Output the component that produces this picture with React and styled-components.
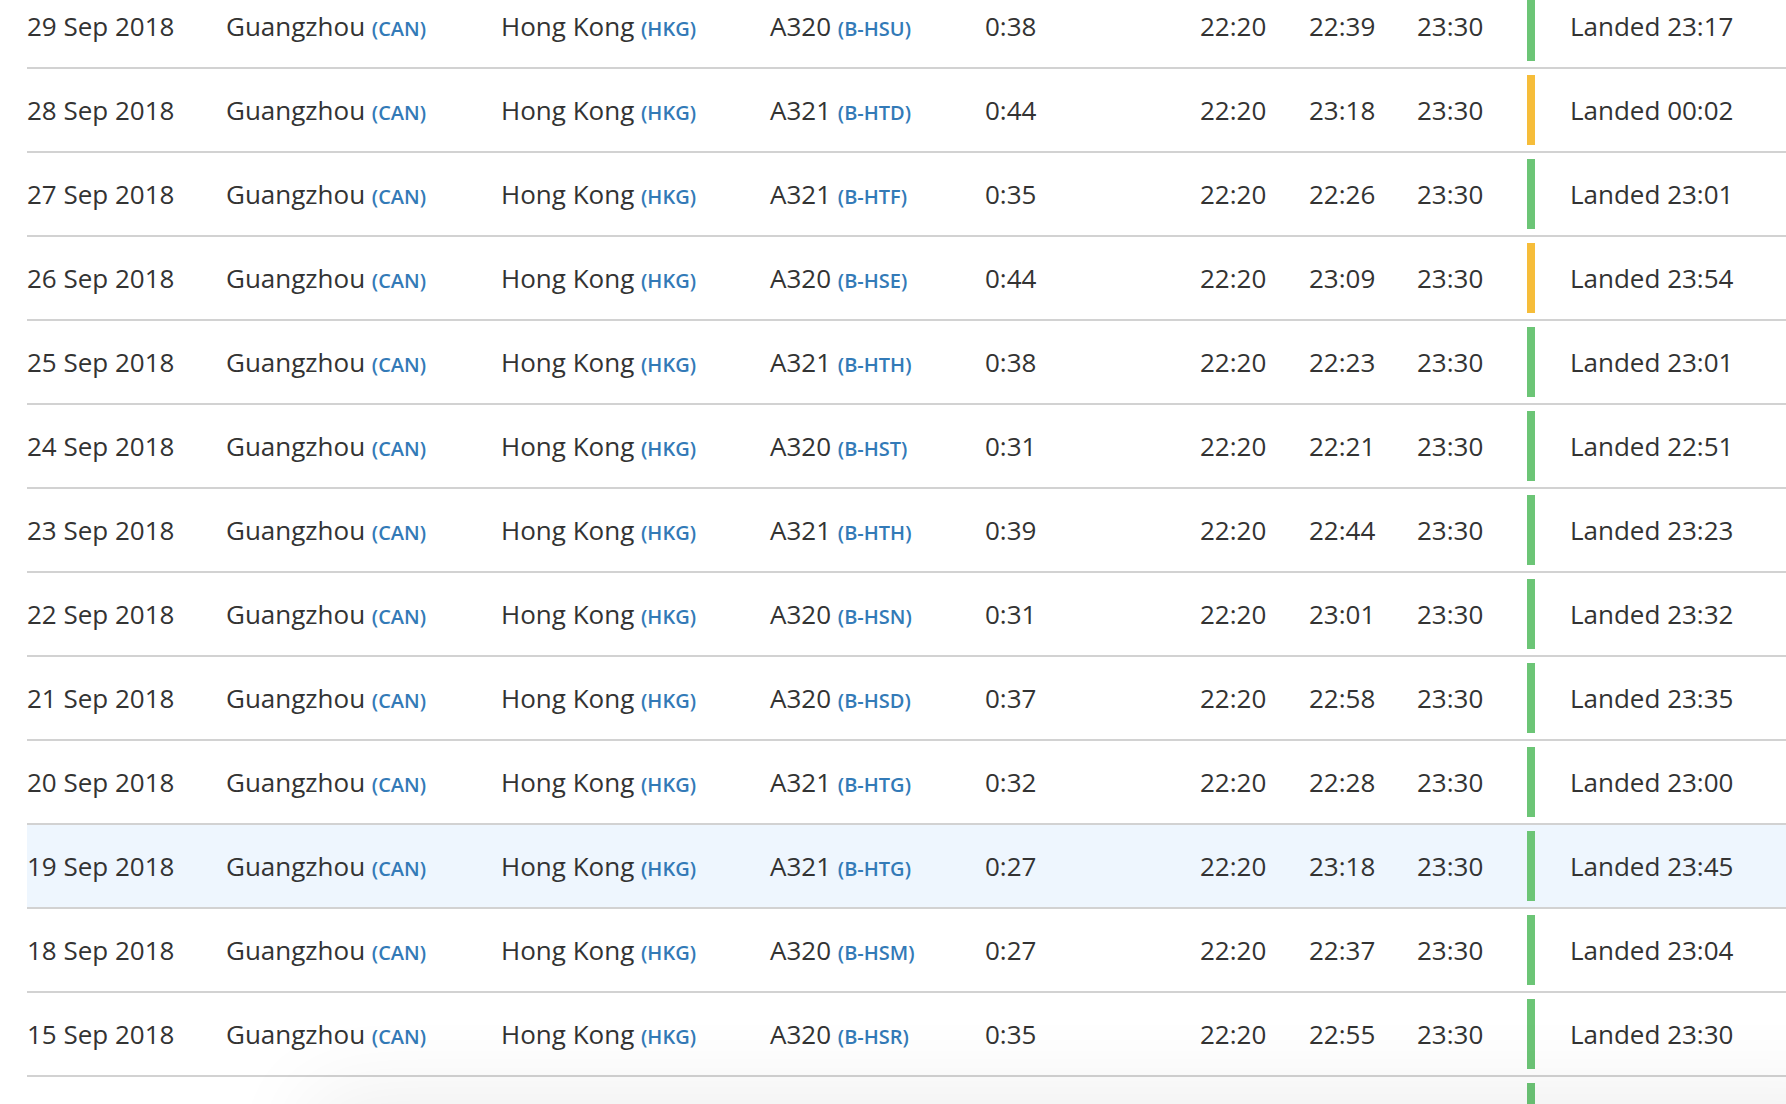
import React from "react";
import styled, { createGlobalStyle } from "styled-components";

const GlobalStyle = createGlobalStyle`
  html, body {
    margin: 0;
    padding: 0;
    background: #ffffff;
    overflow: hidden;
  }
  body {
    font-family: "Open Sans", "Liberation Sans", sans-serif;
    color: #333333;
  }
`;

const flights = [
  { date: "29 Sep 2018", type: "A320", reg: "B-HSU", time: "0:38", atd: "22:39", status: "ok", landed: "23:17" },
  { date: "28 Sep 2018", type: "A321", reg: "B-HTD", time: "0:44", atd: "23:18", status: "late", landed: "00:02" },
  { date: "27 Sep 2018", type: "A321", reg: "B-HTF", time: "0:35", atd: "22:26", status: "ok", landed: "23:01" },
  { date: "26 Sep 2018", type: "A320", reg: "B-HSE", time: "0:44", atd: "23:09", status: "late", landed: "23:54" },
  { date: "25 Sep 2018", type: "A321", reg: "B-HTH", time: "0:38", atd: "22:23", status: "ok", landed: "23:01" },
  { date: "24 Sep 2018", type: "A320", reg: "B-HST", time: "0:31", atd: "22:21", status: "ok", landed: "22:51" },
  { date: "23 Sep 2018", type: "A321", reg: "B-HTH", time: "0:39", atd: "22:44", status: "ok", landed: "23:23" },
  { date: "22 Sep 2018", type: "A320", reg: "B-HSN", time: "0:31", atd: "23:01", status: "ok", landed: "23:32" },
  { date: "21 Sep 2018", type: "A320", reg: "B-HSD", time: "0:37", atd: "22:58", status: "ok", landed: "23:35" },
  { date: "20 Sep 2018", type: "A321", reg: "B-HTG", time: "0:32", atd: "22:28", status: "ok", landed: "23:00" },
  { date: "19 Sep 2018", type: "A321", reg: "B-HTG", time: "0:27", atd: "23:18", status: "ok", landed: "23:45", hover: true },
  { date: "18 Sep 2018", type: "A320", reg: "B-HSM", time: "0:27", atd: "22:37", status: "ok", landed: "23:04" },
  { date: "15 Sep 2018", type: "A320", reg: "B-HSR", time: "0:35", atd: "22:55", status: "ok", landed: "23:30" },
];

const FlightRow = ({ f }) => (
  <Row $hover={f.hover}>
    <Cell>{f.date}</Cell>
    <Cell>
      Guangzhou <Code>(CAN)</Code>
    </Cell>
    <Cell>
      Hong Kong <Code>(HKG)</Code>
    </Cell>
    <Cell>
      {f.type} <Code>({f.reg})</Code>
    </Cell>
    <Cell>{f.time}</Cell>
    <Cell>22:20</Cell>
    <Cell>{f.atd}</Cell>
    <Cell>23:30</Cell>
    <StatusBar $status={f.status} />
    <Cell>Landed {f.landed}</Cell>
  </Row>
);

const App = () => {
  return (
    <>
      <GlobalStyle />
      <Page>
        <Table>
          {flights.map((f, i) => (
            <FlightRow key={i} f={f} />
          ))}
          {/* next row sits below the fold, only its status bar shows */}
          <Row>
            <Cell />
            <Cell />
            <Cell />
            <Cell />
            <Cell />
            <Cell />
            <Cell />
            <Cell />
            <StatusBar $status="ok" />
            <Cell />
          </Row>
        </Table>
      </Page>
      <BottomShade />
    </>
  );
};

export default App;

const Page = styled.div`
  width: 1786px;
  height: 1104px;
  overflow: hidden;
`;

const Table = styled.div`
  margin-top: -15px;
  margin-left: 27px;
  display: flex;
  flex-direction: column;
`;

const Row = styled.div`
  display: grid;
  grid-template-columns: 199px 275px 269px 215px 215px 109px 108px 108px 45px 1fr;
  align-items: center;
  height: 82px;
  flex-shrink: 0;
  border-bottom: 2px solid #d2d2d2;
  background: ${(p) => (p.$hover ? "#eef6fe" : "transparent")};
`;

const Cell = styled.div`
  font-size: 26px;
  line-height: 1;
  color: #333333;
  white-space: nowrap;
`;

const Code = styled.span`
  font-size: 20px;
  font-weight: 600;
  color: #337ab7;
`;

const StatusBar = styled.div`
  width: 8px;
  height: 70px;
  margin-left: 2px;
  background: ${(p) => (p.$status === "late" ? "#f6bd3a" : "#6cc576")};
`;

const BottomShade = styled.div`
  position: fixed;
  left: 320px;
  right: -80px;
  bottom: -120px;
  height: 120px;
  background: #f2f2f2;
  box-shadow: 0 0 90px 10px rgba(0, 0, 0, 0.07);
  pointer-events: none;
`;
